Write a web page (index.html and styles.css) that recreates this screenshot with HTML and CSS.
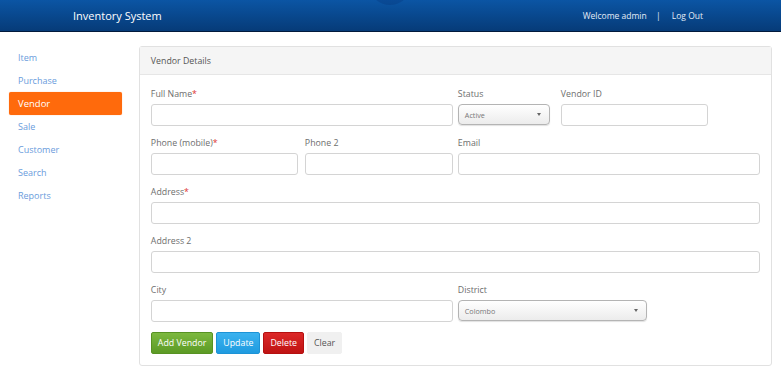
FILE: index.html
```html
<!DOCTYPE html>
<html lang="en">
<head>
    <meta charset="UTF-8">
    <meta name="viewport" content="width=device-width, initial-scale=1.0">
    <title>Inventory System - Vendor</title>
    <link rel="stylesheet" href="styles.css">
</head>
<body>
    <div class="topbar">
        <div class="brand">Inventory System</div>
        <div class="user-links">
            <span>Welcome admin</span>
            <span class="sep">|</span>
            <a href="#">Log Out</a>
        </div>
    </div>
    <div class="page">
        <ul class="sidebar">
            <li><a href="#">Item</a></li>
            <li><a href="#">Purchase</a></li>
            <li class="active"><a href="#">Vendor</a></li>
            <li><a href="#">Sale</a></li>
            <li><a href="#">Customer</a></li>
            <li><a href="#">Search</a></li>
            <li><a href="#">Reports</a></li>
        </ul>
        <div class="panel">
            <div class="panel-heading">Vendor Details</div>
            <div class="panel-body">
                <div class="row">
                    <div class="field half">
                        <label>Full Name<span class="req">*</span></label>
                        <input type="text">
                    </div>
                    <div class="half split-right">
                        <div class="field status">
                            <label>Status</label>
                            <div class="select"><span>Active</span></div>
                        </div>
                        <div class="field vendor-id">
                            <label>Vendor ID</label>
                            <input type="text">
                        </div>
                    </div>
                </div>
                <div class="row">
                    <div class="half split-left">
                        <div class="field">
                            <label>Phone (mobile)<span class="req">*</span></label>
                            <input type="text">
                        </div>
                        <div class="field">
                            <label>Phone 2</label>
                            <input type="text">
                        </div>
                    </div>
                    <div class="field half">
                        <label>Email</label>
                        <input type="text">
                    </div>
                </div>
                <div class="row">
                    <div class="field full">
                        <label>Address<span class="req">*</span></label>
                        <input type="text">
                    </div>
                </div>
                <div class="row">
                    <div class="field full">
                        <label>Address 2</label>
                        <input type="text">
                    </div>
                </div>
                <div class="row">
                    <div class="field half">
                        <label>City</label>
                        <input type="text">
                    </div>
                    <div class="half">
                        <div class="field district">
                            <label>District</label>
                            <div class="select"><span>Colombo</span></div>
                        </div>
                    </div>
                </div>
                <div class="buttons">
                    <button class="btn btn-add">Add Vendor</button>
                    <button class="btn btn-update">Update</button>
                    <button class="btn btn-delete">Delete</button>
                    <button class="btn btn-clear">Clear</button>
                </div>
            </div>
        </div>
    </div>
</body>
</html>
```

FILE: styles.css
```css
body {
    margin: 0;
    font-family: 'Open Sans', 'Noto Sans', sans-serif;
    background-color: #fff;
    color: #555;
}
.topbar {
    height: 31px;
    display: flex;
    align-items: center;
    justify-content: space-between;
    padding: 0 78px 0 73px;
    background: linear-gradient(#0b55a4, #063b78);
    border-bottom: 1px solid #021a3c;
    position: relative;
    overflow: hidden;
}
.topbar::before {
    content: '';
    position: absolute;
    left: 373px;
    top: -20px;
    width: 34px;
    height: 25px;
    border-radius: 50%;
    background-color: rgba(0, 30, 90, 0.18);
}
.brand {
    color: #fff;
    font-size: 11px;
    font-weight: 400;
}
.user-links {
    color: #e4ecf7;
    font-size: 8.5px;
}
.user-links a {
    color: #e4ecf7;
    text-decoration: none;
}
.sep {
    margin: 0 9px 0 7px;
}
.page {
    display: flex;
    align-items: flex-start;
    padding: 14px 9px 0 9px;
}
.sidebar {
    list-style: none;
    margin: 0;
    padding: 0;
    width: 113px;
    margin-right: 17px;
}
.sidebar li {
    height: 23px;
    display: flex;
    align-items: center;
    padding-left: 9px;
    font-size: 9px;
}
.sidebar a {
    color: #6a9cdc;
    text-decoration: none;
}
.sidebar li.active {
    background-color: #ff6a0c;
    border-radius: 2px;
    box-shadow: 0 0 1px rgba(255, 100, 0, 0.6);
}
.sidebar li.active a {
    color: #fff;
    font-size: 9.5px;
}
.panel {
    width: 632px;
    border: 1px solid #e1e1e1;
    border-radius: 3px;
}
.panel-heading {
    height: 27px;
    display: flex;
    align-items: center;
    padding-left: 11px;
    background-color: #f5f5f5;
    border-bottom: 1px solid #e6e6e6;
    font-size: 8.8px;
    color: #555;
}
.panel-body {
    padding: 10px 11px 11px 11px;
}
.row {
    display: flex;
    gap: 5px;
    width: 609px;
    margin-bottom: 8px;
}
.field {
    display: flex;
    flex-direction: column;
}
.half {
    width: 302px;
}
.full {
    width: 609px;
}
.split-left {
    display: flex;
    gap: 7px;
}
.split-left .field:first-child {
    width: 147px;
}
.split-left .field:last-child {
    width: 148px;
}
.split-right {
    display: flex;
    gap: 11px;
}
.status {
    width: 92px;
}
.vendor-id {
    width: 147px;
}
.district {
    width: 189px;
}
label {
    box-sizing: border-box;
    font-size: 8.8px;
    color: #6e6e6e;
    height: 19px;
    padding-top: 2px;
    line-height: 14px;
}
.req {
    color: #d33;
}
input {
    box-sizing: border-box;
    height: 22px;
    width: 100%;
    margin: 0;
    border: 1px solid #d4d4d4;
    border-radius: 3px;
    background-color: #fff;
}
.select {
    box-sizing: border-box;
    height: 21px;
    display: flex;
    align-items: center;
    padding-left: 6px;
    border: 1px solid #b4b4b4;
    border-radius: 4px;
    background: linear-gradient(#fff, #ececec);
    box-shadow: 0 1px 1px rgba(0, 0, 0, 0.12);
    font-size: 7.2px;
    color: #777;
    position: relative;
}
.select::after {
    content: '';
    position: absolute;
    right: 8px;
    top: 8px;
    border-left: 2px solid transparent;
    border-right: 2px solid transparent;
    border-top: 3px solid #666;
}
.buttons {
    display: flex;
    gap: 3px;
    padding-top: 2px;
}
.btn {
    height: 22px;
    padding: 0 6px;
    font-family: inherit;
    font-size: 8.8px;
    border-radius: 2px;
    cursor: pointer;
    color: #fff;
    border: 1px solid transparent;
}
.btn-add {
    background: linear-gradient(#7cb83f, #5c9a25);
    border-color: #579223;
}
.btn-update {
    background: linear-gradient(#3bb2ef, #1f9be0);
    border-color: #1d93d6;
}
.btn-delete {
    background: linear-gradient(#dc2828, #bf1313);
    border-color: #b51010;
}
.btn-clear {
    background-color: #f0f0f0;
    border-color: #f0f0f0;
    color: #555;
}
```
